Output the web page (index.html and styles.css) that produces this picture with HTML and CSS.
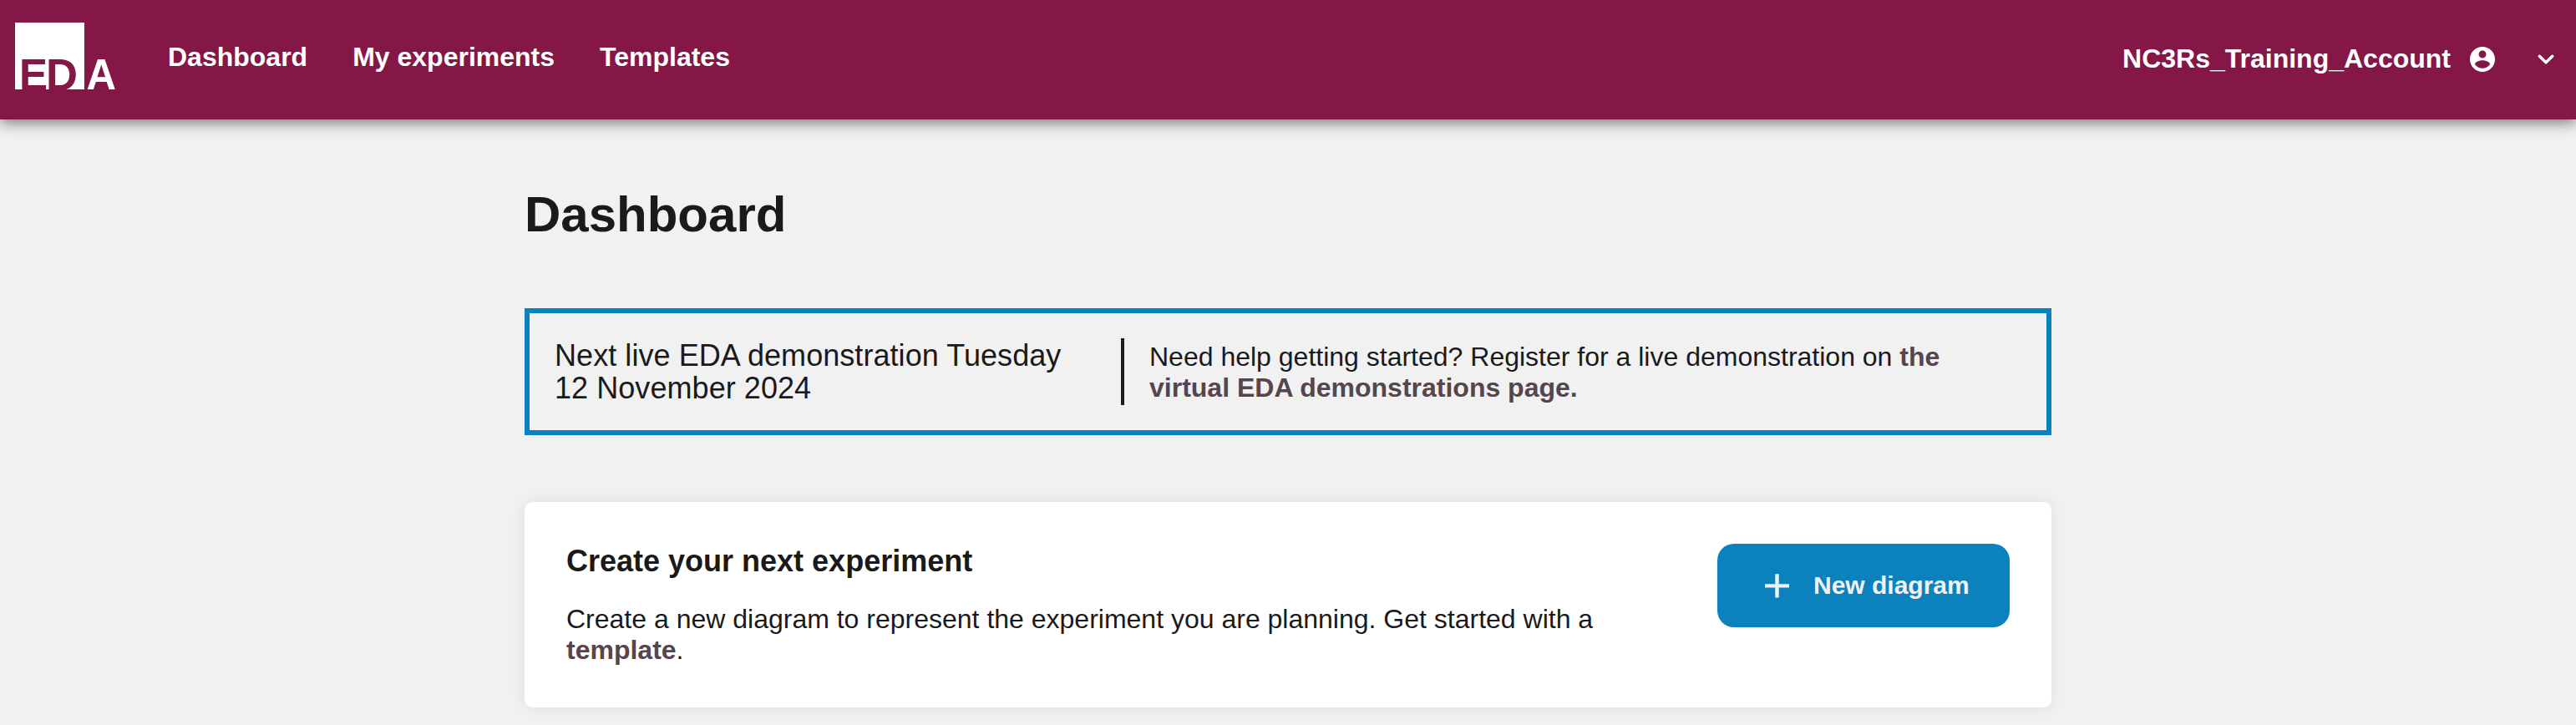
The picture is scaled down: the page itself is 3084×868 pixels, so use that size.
FILE: index.html
```html
<!DOCTYPE html>
<html lang="en">
<head>
<meta charset="utf-8">
<title>Dashboard</title>
<link rel="stylesheet" href="styles.css">
</head>
<body>
<header class="topbar">
  <a class="logo" aria-label="EDA">
    <svg width="122" height="80" viewBox="0 0 122 80">
      <rect width="83" height="80" fill="#fff"/>
      <text class="logo-cut" x="5" y="81" textLength="34" lengthAdjust="spacingAndGlyphs">E</text>
      <text class="logo-cut" x="37" y="81" textLength="38" lengthAdjust="spacingAndGlyphs">D</text>
      <text class="logo-out" x="85.500" y="80" textLength="35.500" lengthAdjust="spacingAndGlyphs">A</text>
    </svg>
  </a>
  <nav class="nav">
    <a>Dashboard</a>
    <a>My experiments</a>
    <a>Templates</a>
  </nav>
  <div class="account">
    <span>NC3Rs_Training_Account</span>
    <svg class="avatar" width="36" height="36" viewBox="0 0 24 24" fill="#fff"><path d="M12 2C6.48 2 2 6.48 2 12s4.480 10 10 10 10-4.480 10-10S17.520 2 12 2zm0 3c1.660 0 3 1.340 3 3s-1.340 3-3 3-3-1.340-3-3 1.340-3 3-3zm0 14.200c-2.500 0-4.710-1.280-6-3.220.03-1.990 4-3.080 6-3.080 1.990 0 5.970 1.090 6 3.080-1.290 1.940-3.500 3.220-6 3.220z"/></svg>
    <svg class="chevron" width="20" height="12" viewBox="0 0 20 12" fill="none" stroke="#fff" stroke-width="3.400" stroke-linecap="round" stroke-linejoin="round"><path d="M2.300 2.200 10 9.800 17.700 2.200"/></svg>
  </div>
</header>
<main class="page">
  <h1 class="title">Dashboard</h1>
  <section class="notice">
    <p class="notice-date">Next live EDA demonstration Tuesday<br>12 November 2024</p>
    <p class="notice-text">Need help getting started? Register for a live demonstration on <a class="link">the<br>virtual EDA demonstrations page.</a></p>
  </section>
  <section class="card">
    <div class="card-body">
      <h2 class="card-title">Create your next experiment</h2>
      <p class="card-text">Create a new diagram to represent the experiment you are planning. Get started with a<br><a class="link">template</a>.</p>
    </div>
    <button class="button">
      <svg width="29" height="29" viewBox="0 0 29 29" stroke="#f1f1f3" stroke-width="4.400"><path d="M14.500 0.300V28.500M0 14.400H29"/></svg>
      <span>New diagram</span>
    </button>
  </section>
</main>
</body>
</html>
```
FILE: styles.css
```css
* { box-sizing: border-box; margin: 0; padding: 0; }

body {
  min-height: 868px;
  background: #f1f1f1;
  color: #1a1a1a;
  font-family: "Liberation Sans", Arial, sans-serif;
  font-size: 32px;
  line-height: 37px;
  overflow: hidden;
}

.topbar {
  display: flex;
  align-items: flex-start;
  height: 143px;
  padding: 27px 26px 0 18px;
  background: #841746;
  color: #fff;
  font-weight: 700;
  box-shadow: 0 4px 16px rgba(0, 0, 0, 0.5);
}

.logo, .logo svg { display: block; overflow: visible; }
.logo-cut { fill: #841746; font-size: 54px; font-weight: 700; }
.logo-out { fill: #fff; font-size: 51px; font-weight: 700; }

.nav { display: flex; gap: 54px; margin: 23px 0 0 61px; }

.account { display: flex; align-items: center; margin: 25px 0 0 auto; }
.avatar { margin: 0 48px 0 20px; }

.page { width: 1828px; margin: 0 auto; }

.title { padding-top: 80px; font-size: 60px; line-height: 68px; }

.notice {
  display: flex;
  align-items: center;
  height: 152px;
  margin-top: 78px;
  padding: 0 30px;
  border: 6px solid #0b81be;
}
.notice-date { width: 678px; font-size: 36px; line-height: 39px; letter-spacing: 0.06px; }
.notice-text {
  height: 80px;
  padding: 4px 0 0 30px;
  border-left: 4px solid #1a1a1a;
}

.link { color: #54464c; font-weight: 700; }

.card {
  display: flex;
  justify-content: space-between;
  align-items: flex-start;
  height: 246px;
  margin-top: 80px;
  padding: 50px;
  border-radius: 10px;
  background: #fff;
  box-shadow: 0 0 20px rgba(0, 0, 0, 0.08);
}
.card-title { padding-top: 1px; font-size: 36px; line-height: 40px; }
.card-text { margin-top: 31px; }

.button {
  display: flex;
  align-items: center;
  gap: 29px;
  width: 350px;
  height: 100px;
  padding-left: 57px;
  border: 0;
  border-radius: 20px;
  background: #0b81be;
  color: #f1f1f3;
  font: 700 30px/34px "Liberation Sans", Arial, sans-serif;
}
```
